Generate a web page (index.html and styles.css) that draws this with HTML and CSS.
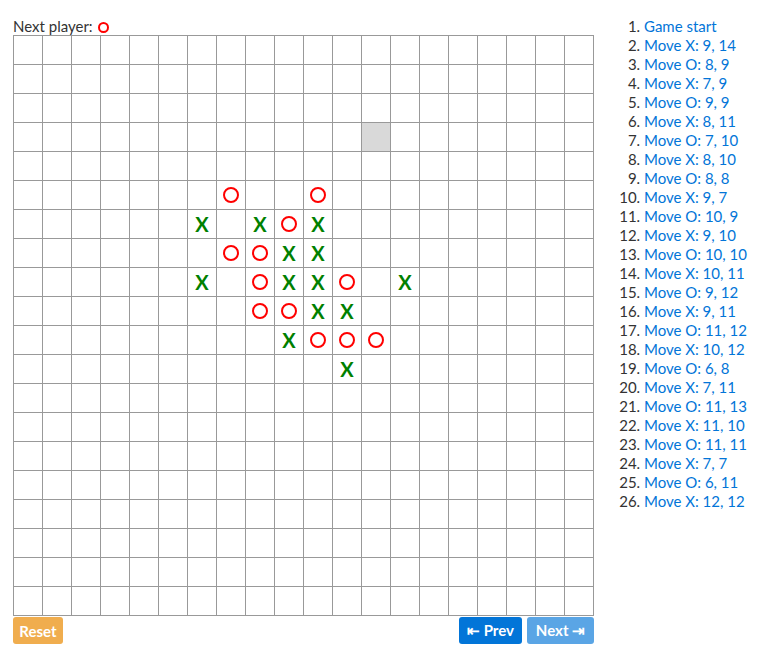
FILE: index.html
```html
<!DOCTYPE html>
<html>
<head>
<meta charset="utf-8">
<link rel="stylesheet" href="styles.css">
</head>
<body>
<div class="game">
  <div class="game-board">
    <div class="status">Next player: <span class="o-mark small"></span></div>
    <div class="board">
      <div class="cell hl r3 c12"></div>
      <div class="cell r5 c7"><span class="o-mark"></span></div>
      <div class="cell r5 c10"><span class="o-mark"></span></div>
      <div class="cell r6 c6"><span class="x-mark">X</span></div>
      <div class="cell r6 c8"><span class="x-mark">X</span></div>
      <div class="cell r6 c9"><span class="o-mark"></span></div>
      <div class="cell r6 c10"><span class="x-mark">X</span></div>
      <div class="cell r7 c7"><span class="o-mark"></span></div>
      <div class="cell r7 c8"><span class="o-mark"></span></div>
      <div class="cell r7 c9"><span class="x-mark">X</span></div>
      <div class="cell r7 c10"><span class="x-mark">X</span></div>
      <div class="cell r8 c6"><span class="x-mark">X</span></div>
      <div class="cell r8 c8"><span class="o-mark"></span></div>
      <div class="cell r8 c9"><span class="x-mark">X</span></div>
      <div class="cell r8 c10"><span class="x-mark">X</span></div>
      <div class="cell r8 c11"><span class="o-mark"></span></div>
      <div class="cell r8 c13"><span class="x-mark">X</span></div>
      <div class="cell r9 c8"><span class="o-mark"></span></div>
      <div class="cell r9 c9"><span class="o-mark"></span></div>
      <div class="cell r9 c10"><span class="x-mark">X</span></div>
      <div class="cell r9 c11"><span class="x-mark">X</span></div>
      <div class="cell r10 c9"><span class="x-mark">X</span></div>
      <div class="cell r10 c10"><span class="o-mark"></span></div>
      <div class="cell r10 c11"><span class="o-mark"></span></div>
      <div class="cell r10 c12"><span class="o-mark"></span></div>
      <div class="cell r11 c11"><span class="x-mark">X</span></div>
    </div>
    <div class="controls">
      <button class="btn btn-warning">Reset</button>
      <div class="nav">
        <button class="btn btn-primary">⇤ Prev</button>
        <button class="btn btn-primary disabled">Next ⇥</button>
      </div>
    </div>
  </div>
  <ol class="moves">
    <li><a href="#">Game start</a></li>
    <li><a href="#">Move X: 9, 14</a></li>
    <li><a href="#">Move O: 8, 9</a></li>
    <li><a href="#">Move X: 7, 9</a></li>
    <li><a href="#">Move O: 9, 9</a></li>
    <li><a href="#">Move X: 8, 11</a></li>
    <li><a href="#">Move O: 7, 10</a></li>
    <li><a href="#">Move X: 8, 10</a></li>
    <li><a href="#">Move O: 8, 8</a></li>
    <li><a href="#">Move X: 9, 7</a></li>
    <li><a href="#">Move O: 10, 9</a></li>
    <li><a href="#">Move X: 9, 10</a></li>
    <li><a href="#">Move O: 10, 10</a></li>
    <li><a href="#">Move X: 10, 11</a></li>
    <li><a href="#">Move O: 9, 12</a></li>
    <li><a href="#">Move X: 9, 11</a></li>
    <li><a href="#">Move O: 11, 12</a></li>
    <li><a href="#">Move X: 10, 12</a></li>
    <li><a href="#">Move O: 6, 8</a></li>
    <li><a href="#">Move X: 7, 11</a></li>
    <li><a href="#">Move O: 11, 13</a></li>
    <li><a href="#">Move X: 11, 10</a></li>
    <li><a href="#">Move O: 11, 11</a></li>
    <li><a href="#">Move X: 7, 7</a></li>
    <li><a href="#">Move O: 6, 11</a></li>
    <li><a href="#">Move X: 12, 12</a></li>
  </ol>
</div>
</body>
</html>
```
FILE: styles.css
```css
html, body {
  margin: 0;
  padding: 0;
  background: #fff;
}
body {
  font-family: "Lato", "Open Sans", sans-serif;
  color: #333;
  font-size: 15px;
}
.game {
  display: flex;
  padding: 18px 0 0 13px;
}
.game-board {
  width: 581px;
  display: flex;
  flex-direction: column;
}
.status {
  height: 17px;
  line-height: 17px;
  font-size: 15px;
  display: flex;
  align-items: center;
  gap: 5px;
}
.o-mark {
  display: block;
  width: 12px;
  height: 12px;
  border: 2px solid #f00;
  border-radius: 50%;
  box-sizing: content-box;
}
.o-mark.small {
  width: 7px;
  height: 7px;
  border-width: 2px;
  margin-top: 1px;
}
.x-mark {
  color: #008000;
  font-weight: 700;
  font-size: 20px;
  line-height: 1;
}
.board {
  width: 581px;
  height: 581px;
  box-sizing: border-box;
  padding: 1px 0 0 1px;
  background-image:
    linear-gradient(to right, #999 1px, transparent 1px),
    linear-gradient(to bottom, #999 1px, transparent 1px);
  background-size: 29px 29px;
  display: grid;
  grid-template-columns: repeat(20, 28px);
  grid-template-rows: repeat(20, 28px);
  gap: 1px;
}
.cell {
  display: flex;
  align-items: center;
  justify-content: center;
}
.cell.hl { background: #d9d9d9; }
.r3 { grid-row: 4; }
.r5 { grid-row: 6; }
.r6 { grid-row: 7; }
.r7 { grid-row: 8; }
.r8 { grid-row: 9; }
.r9 { grid-row: 10; }
.r10 { grid-row: 11; }
.r11 { grid-row: 12; }
.c6 { grid-column: 7; }
.c7 { grid-column: 8; }
.c8 { grid-column: 9; }
.c9 { grid-column: 10; }
.c10 { grid-column: 11; }
.c11 { grid-column: 12; }
.c12 { grid-column: 13; }
.c13 { grid-column: 14; }
.controls {
  display: flex;
  justify-content: space-between;
  padding-top: 1px;
}
.nav {
  display: flex;
  gap: 5px;
}
.btn {
  font-family: "Lato", "Open Sans", sans-serif;
  font-weight: 700;
  font-size: 15px;
  color: #fff;
  border: none;
  border-radius: 3px;
  height: 27px;
  padding: 0;
  margin: 0;
}
.btn-warning { background: #f0ad4e; width: 50px; }
.btn-primary { background: #0275d8; width: 63px; }
.btn-primary.disabled { background: #5aa5e5; width: 67px; }
.moves {
  margin: 0;
  margin-top: -1px;
  padding-left: 40px;
  margin-left: 10px;
  font-size: 15px;
  line-height: 19px;
}
.moves a {
  color: #0275d8;
  text-decoration: none;
}
```
